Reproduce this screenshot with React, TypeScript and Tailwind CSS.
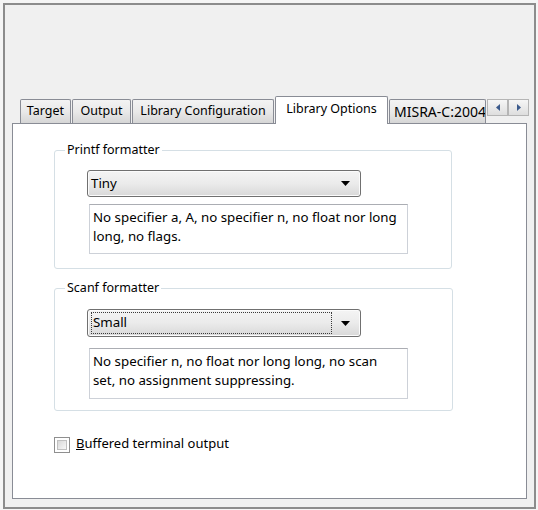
const font = "font-['Noto_Sans',sans-serif]";

function Tab({ label, width, selected }: { label: string; width: string; selected?: boolean }) {
  if (selected) {
    return (
      <div
        className={`relative z-10 -mb-px h-[28px] ${width} flex items-center justify-center border border-b-0 border-[#898c95] rounded-t-[2px] bg-white text-[12.5px] pb-[3px]`}
      >
        {label}
      </div>
    );
  }
  return (
    <div
      className={`h-[24px] ${width} flex items-center justify-center overflow-hidden whitespace-nowrap border border-b-0 border-[#898c95] rounded-t-[2px] bg-gradient-to-b from-[#f3f3f3] via-[#e9e9e9] to-[#d6d6d6] text-[12.5px]`}
    >
      {label}
    </div>
  );
}

function ArrowButton({ dir }: { dir: "left" | "right" }) {
  return (
    <div className="w-[21px] h-[17px] flex items-center justify-center border border-[#b5b5b5] bg-gradient-to-b from-[#f6f6f6] to-[#dedede]">
      <svg width="4" height="7" viewBox="0 0 4 7">
        {dir === "left" ? <path d="M4 0 L0 3.5 L4 7 Z" fill="#3b5a8c" /> : <path d="M0 0 L4 3.5 L0 7 Z" fill="#3b5a8c" />}
      </svg>
    </div>
  );
}

function Combo({ value, focused, height }: { value: string; focused?: boolean; height: string }) {
  return (
    <div
      className={`w-[274px] ${height} flex items-center border border-[#707070] rounded-[3px] bg-gradient-to-b from-[#f4f4f4] via-[#ebebeb] to-[#d8d8d8] text-[13.3px] shadow-[inset_0_0_0_1px_#fbfbfb]`}
    >
      {focused ? (
        <div className="ml-[3px] my-[2px] self-stretch w-[241px] flex items-center pl-[1px] border border-dotted border-[#3a3a3a]">
          {value}
        </div>
      ) : (
        <div className="ml-[3px] w-[242px]">{value}</div>
      )}
      <div className="flex-1 flex justify-center pr-[2px]">
        <svg width="9" height="5" viewBox="0 0 9 5">
          <path d="M0 0 L9 0 L4.5 5 Z" fill="#000" />
        </svg>
      </div>
    </div>
  );
}

function Group({
  title,
  children,
  className,
}: {
  title: string;
  children: React.ReactNode;
  className: string;
}) {
  return (
    <div className={`relative border border-[#d5dfe5] rounded-[3px] pl-[32px] ${className}`}>
      <span className="absolute -top-[10px] left-[10px] bg-white px-[2px] text-[12.5px] leading-[18px]">{title}</span>
      {children}
    </div>
  );
}

function InfoBox({ lines, className }: { lines: string[]; className: string }) {
  return (
    <div
      className={`w-[319px] ml-[2px] border border-[#cdd1d8] border-t-[#abadb3] bg-white pl-[3px] pt-[3px] text-[13.3px] leading-[19px] ${className}`}
    >
      {lines.map((l) => (
        <div key={l}>{l}</div>
      ))}
    </div>
  );
}

export default function App() {
  return (
    <div className={`w-[538px] h-[510px] bg-[#f5f5f5] pt-[3px] pl-[3px] text-black ${font}`}>
      <div className="w-[533px] h-[506px] border-2 border-[#8c8c8c] bg-[#f0f0f0] pt-[91px] pl-[7px]">
        {/* tab strip */}
        <div className="flex items-end gap-px h-[27px] pl-[8px]">
          <Tab label="Target" width="w-[51px]" />
          <Tab label="Output" width="w-[59px]" />
          <Tab label="Library Configuration" width="w-[142px]" />
          <Tab label="Library Options" width="w-[113px]" selected />
          <div className="h-[24px] w-[97px] flex items-center overflow-hidden whitespace-nowrap border border-b-0 border-[#898c95] rounded-t-[2px] bg-gradient-to-b from-[#f3f3f3] via-[#e9e9e9] to-[#d6d6d6] text-[14px] pl-[4px]">
            MISRA-C:2004
          </div>
          <div className="self-start mt-[3px] flex">
            <ArrowButton dir="left" />
            <ArrowButton dir="right" />
          </div>
        </div>

        {/* panel */}
        <div className="w-[515px] h-[376px] border border-[#898c95] bg-white pl-[41px] pt-[26px] flex flex-col">
          <Group title="Printf formatter" className="w-[398px] h-[119px] pt-[19px]">
            <Combo value="Tiny" height="h-[27px]" />
            <InfoBox
              className="mt-[7px] h-[50px]"
              lines={["No specifier a, A, no specifier n, no float nor long", "long, no flags."]}
            />
          </Group>

          <Group title="Scanf formatter" className="mt-[19px] w-[399px] h-[123px] pt-[20px]">
            <Combo value="Small" height="h-[28px]" focused />
            <InfoBox
              className="mt-[11px] h-[51px]"
              lines={["No specifier n, no float nor long long, no scan", "set, no assignment suppressing."]}
            />
          </Group>

          <div className="mt-[25px] flex items-center gap-[6px] text-[13px]">
            <div className="w-[16px] h-[16px] border border-[#8f8f8f] bg-white p-[2px]">
              <div className="w-full h-full border border-[#c0c0c0] bg-gradient-to-br from-[#d8d8d8] to-[#f7f7f7]" />
            </div>
            <span className="-mt-[2px]">
              <span className="underline">B</span>uffered terminal output
            </span>
          </div>
        </div>
      </div>
    </div>
  );
}
